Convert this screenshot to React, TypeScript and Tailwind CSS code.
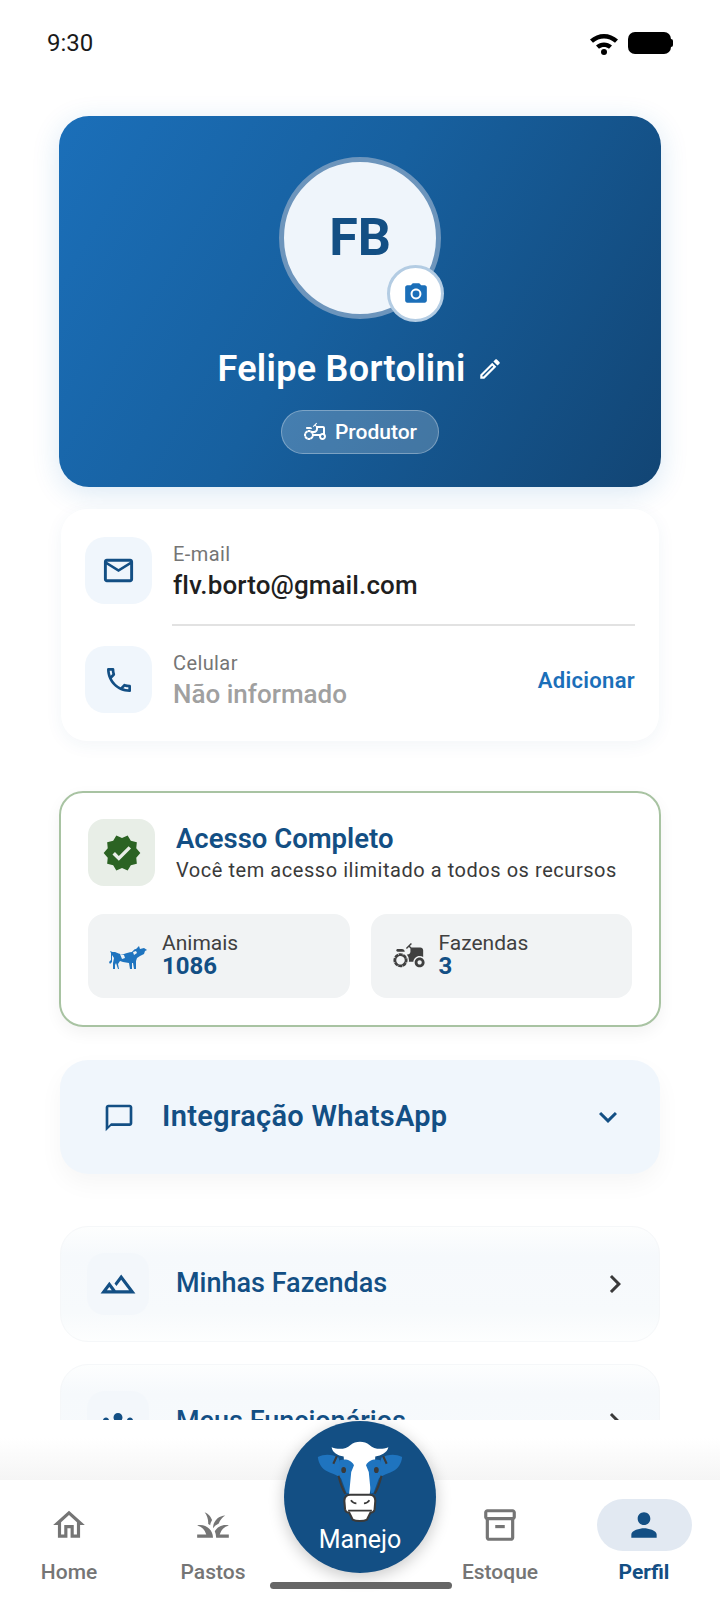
import React from 'react'
import {
  MdAgriculture,
  MdCameraAlt,
  MdChevronRight,
  MdGrass,
  MdGroups,
  MdKeyboardArrowDown,
  MdOutlineAgriculture,
  MdOutlineChatBubbleOutline,
  MdOutlineEdit,
  MdOutlineHome,
  MdOutlineInventory2,
  MdOutlineLandscape,
  MdOutlineLocalPhone,
  MdOutlineMailOutline,
  MdPerson,
  MdVerified,
} from 'react-icons/md'

function StatusBar() {
  return (
    <div className="flex h-[86px] items-center justify-between pl-[47px] pr-[47px]">
      <span className="text-[24px] leading-none text-[#1a1a1a]">9:30</span>
      <div className="flex items-center gap-[9px]">
        <svg width="30" height="24" viewBox="0 0 30 24">
          <path d="M1 8.500C9 1 21 1 29 8.500l-3 3.200C19.500 6 10.500 6 4 11.700z" fill="#000" />
          <path d="M7 14.600c4.600-4 11.400-4 16 0l-3 3.200c-3-2.500-7-2.500-10 0z" fill="#000" />
          <circle cx="15" cy="21" r="3" fill="#000" />
        </svg>
        <div className="flex items-center">
          <div className="h-[22px] w-[43px] rounded-[7px] bg-black" />
          <div className="h-[8px] w-[2px] rounded-r-sm bg-black" />
        </div>
      </div>
    </div>
  )
}

function ProfileHeader() {
  return (
    <div className="mx-[59px] mt-[30px] flex h-[371px] flex-col items-center rounded-[30px] bg-[linear-gradient(120deg,#1b6fb9_0%,#17609f_45%,#124574_100%)] pt-[41px] shadow-[0_6px_28px_rgba(27,111,185,0.16)]">
      <div className="relative h-[162px] w-[162px] rounded-full border-[5px] border-[#6d95bc] bg-[#eff5fb]">
        <div className="flex h-full items-center justify-center text-[52px] font-bold leading-none text-[#134f84]">FB</div>
        <div className="absolute left-[103px] top-[103px] flex h-[57px] w-[57px] items-center justify-center rounded-full border-[3px] border-[#b3cce3] bg-white text-[#1b6fb9]">
          <MdCameraAlt size={26} />
        </div>
      </div>
      <div className="mt-[28px] flex items-center gap-[11px]">
        <span className="text-[36px] font-semibold leading-[44px] tracking-[0.3px] text-white">Felipe Bortolini</span>
        <MdOutlineEdit size={26} className="text-white" />
      </div>
      <div className="mt-[19px] flex h-[44px] w-[158px] items-center justify-center gap-[8px] rounded-full border border-white/30 bg-white/20 text-white">
        <MdOutlineAgriculture size={24} />
        <span className="text-[21px] font-medium leading-none">Produtor</span>
      </div>
    </div>
  )
}

function IconBox({ children }: { children: React.ReactNode }) {
  return (
    <div className="flex h-[67px] w-[67px] shrink-0 items-center justify-center rounded-[20px] bg-[#f0f6fc] text-[#134f84]">
      {children}
    </div>
  )
}

function ContactCard() {
  return (
    <div className="mx-[61px] mt-[22px] h-[232px] rounded-[26px] bg-white px-[24px] pt-[28px] shadow-[0_4px_18px_rgba(27,79,132,0.06)]">
      <div className="flex items-center gap-[21px]">
        <IconBox>
          <MdOutlineMailOutline size={35} />
        </IconBox>
        <div className="mt-[3px]">
          <p className="text-[20px] leading-[26px] tracking-[0.4px] text-[#757575]">E-mail</p>
          <p className="text-[26px] font-medium leading-[36px] tracking-[0.1px] text-[#1f1f1f]">flv.borto@gmail.com</p>
        </div>
      </div>
      <div className="ml-[87px] mt-[20px] h-[2px] bg-[#e2e2e2]" />
      <div className="mt-[20px] flex items-center gap-[21px]">
        <IconBox>
          <MdOutlineLocalPhone size={32} />
        </IconBox>
        <div className="mt-[3px] flex-1">
          <p className="text-[20px] leading-[26px] tracking-[0.4px] text-[#757575]">Celular</p>
          <p className="text-[26px] font-medium leading-[36px] text-[#a0a0a0]">Não informado</p>
        </div>
        <span className="mt-[2px] text-[22px] font-semibold tracking-[0.3px] text-[#1b6fb9]">Adicionar</span>
      </div>
    </div>
  )
}

function SmallCow() {
  return (
    <svg width="38" height="28" viewBox="0 0 38 28" fill="#1f74bf">
      <path d="M1 9c2 1 3 1 5 1 3 1 6 3 9 2 3-1 5-2 8-2 1-1 2-3 4-3l3-3 1 3 4-1 3 2-2 1-1 3-4 2-3 2-1 3 0 8h-2l-1-6-1 0 0 6h-2l-1-6-6-1-3-1-2 3 1 5H9l-2-6-1 2 0 4H4l0-6 1-5-2-3 0 7-2 2-1-2 2-2 0-7z" />
      <path d="M11 12l4 1 1 3-3 1z" fill="#eff3f5" />
      <path d="M24 10l3-1 1 2-3 2z" fill="#eff3f5" />
    </svg>
  )
}

function StatBox({ icon, label, value, textGap }: { icon: React.ReactNode; label: string; value: string; textGap: string }) {
  return (
    <div className="flex h-[84px] flex-1 items-center rounded-[16px] bg-[#f1f3f4] pl-[21px]">
      {icon}
      <div className={`${textGap} mb-[3px]`}>
        <p className="text-[21px] leading-[23px] text-[#404040]">{label}</p>
        <p className="text-[24px] font-bold leading-[22px] text-[#134f84]">{value}</p>
      </div>
    </div>
  )
}

function AccessCard() {
  return (
    <div className="mx-[59px] mt-[50px] h-[236px] rounded-[24px] border-2 border-[#a8c3a2] bg-white px-[27px] pt-[26px] shadow-[0_6px_16px_rgba(0,0,0,0.05)]">
      <div className="flex items-center gap-[21px]">
        <div className="flex h-[67px] w-[67px] shrink-0 items-center justify-center rounded-[16px] bg-[#e8eee7] text-[#2b6323]">
          <MdVerified size={40} />
        </div>
        <div>
          <p className="text-[27.5px] font-semibold leading-[34px] text-[#134f84]">Acesso Completo</p>
          <p className="text-[20px] leading-[28px] tracking-[0.55px] text-[#3a3a3a]">
            Você tem acesso ilimitado a todos os recursos
          </p>
        </div>
      </div>
      <div className="mt-[28px] flex gap-[21px]">
        <StatBox icon={<SmallCow />} label="Animais" value="1086" textGap="ml-[15px]" />
        <StatBox icon={<MdAgriculture size={34} className="text-[#404040]" />} label="Fazendas" value="3" textGap="ml-[13px]" />
      </div>
    </div>
  )
}

function WhatsappCard() {
  return (
    <div className="mx-[60px] mt-[33px] flex h-[114px] items-center rounded-[28px] bg-[#f0f6fc] pl-[43px] pr-[34px] text-[#134f84] shadow-[0_10px_24px_rgba(0,0,0,0.04)]">
      <MdOutlineChatBubbleOutline size={32} className="mt-[1px]" />
      <span className="ml-[27px] flex-1 text-[29px] font-semibold tracking-[0.3px]">Integração WhatsApp</span>
      <MdKeyboardArrowDown size={36} />
    </div>
  )
}

function MenuRow({ icon, label, className }: { icon: React.ReactNode; label: string; className: string }) {
  return (
    <div className={`mx-[60px] h-[116px] rounded-[28px] border border-[#f5f7f9] bg-[linear-gradient(#fdfefe,#f6f9fc_25%,#f7fafc_75%,#fdfefe)] pl-[26px] pr-[26px] pt-[26px] ${className}`}>
      <div className="flex items-start">
        <div className="flex h-[62px] w-[62px] shrink-0 items-center justify-center rounded-[18px] bg-[#f3f7fb] text-[#134f84]">
          {icon}
        </div>
        <span className="ml-[27px] mt-[14px] flex-1 text-[27px] font-medium leading-[32px] text-[#134f84]">{label}</span>
        <MdChevronRight size={36} className="mt-[13px] text-[#3a3a3a]" />
      </div>
    </div>
  )
}

function NavItem({ icon, label, active }: { icon: React.ReactNode; label: string; active?: boolean }) {
  return (
    <div className="flex flex-col items-center">
      <div className={`flex h-[52px] w-[95px] items-center justify-center rounded-[26px] ${active ? 'bg-[#e2e9f2] text-[#134f84]' : 'text-[#757575]'}`}>
        {icon}
      </div>
      <span className={`mt-[8px] text-[21px] leading-[26px] ${active ? 'font-bold text-[#134f84]' : 'font-medium text-[#757575]'}`}>
        {label}
      </span>
    </div>
  )
}

function CowHead() {
  return (
    <svg width="92" height="86" viewBox="140 85 265 250">
      <path d="M150 140c20-10 42-8 60 2l22 75c-15-22-35-25-55-35-15-8-25-22-27-42z" fill="#1f74bf" />
      <path d="M395 140c-20-10-42-8-60 2l-22 75c15-22 35-25 55-35 15-8 25-22 27-42z" fill="#1f74bf" />
      <path d="M205 138l-10 22M340 138l10 22" stroke="#3a3a3a" strokeWidth="6" fill="none" />
      <path d="M190 112c22 8 42 5 55-7 15-12 40-12 55 0 13 12 33 15 55 7-4 16-20 24-38 27l-3 40-14 72h-58l-14-72-3-40c-18-3-32-11-35-27z" fill="#fff" />
      <path d="M213 150c16-6 34-2 42 14l-8 20-6 62-8-2-20-54z" fill="#1f74bf" />
      <path d="M332 150c-16-6-34-2-42 14l8 20 6 62 8-2 20-54z" fill="#1f74bf" />
      <path d="M210 195c5 20 10 38 20 52M335 195c-5 20-10 38-20 52" stroke="#3a3a3a" strokeWidth="6" fill="none" />
      <ellipse cx="225" cy="178" rx="7" ry="9" fill="#3a3a3a" />
      <ellipse cx="320" cy="178" rx="7" ry="9" fill="#3a3a3a" />
      <path d="M245 250h55c12 0 17 6 17 18l-2 24c-1 8-6 10-12 10l-10 20c-10 6-32 6-42 0l-10-20c-7 0-11-2-12-10l-2-24c0-12 6-18 18-18z" fill="#fff" stroke="#3a3a3a" strokeWidth="6" />
      <path d="M246 266c5 7 10 9 16 9M300 266c-5 7-10 9-16 9M238 296h69" stroke="#3a3a3a" strokeWidth="5" fill="none" />
    </svg>
  )
}

export default function App() {
  return (
    <div className="relative h-[1606px] w-[720px] overflow-hidden bg-white font-[Roboto,sans-serif]">
      <div className="h-[1420px] overflow-hidden">
        <StatusBar />
        <ProfileHeader />
        <ContactCard />
        <AccessCard />
        <WhatsappCard />
        <MenuRow className="mt-[52px]" icon={<MdOutlineLandscape size={38} />} label="Minhas Fazendas" />
        <MenuRow className="mt-[22px]" icon={<MdGroups size={36} />} label="Meus Funcionários" />
      </div>
      <div className="h-[60px] bg-[linear-gradient(#ffffff_30%,#f5f5f5)]" />
      <div className="grid h-[126px] grid-cols-[138px_150px_144px_136px_152px] bg-white pt-[19px]">
        <NavItem icon={<MdOutlineHome size={38} />} label="Home" />
        <NavItem icon={<MdGrass size={38} />} label="Pastos" />
        <div />
        <NavItem icon={<MdOutlineInventory2 size={38} />} label="Estoque" />
        <NavItem active icon={<MdPerson size={38} />} label="Perfil" />
      </div>
      <div className="absolute left-[284px] top-[1421px] flex h-[152px] w-[152px] flex-col items-center rounded-full bg-[#134f84] pt-[17px] shadow-[0_4px_16px_rgba(0,0,0,0.22)]">
        <CowHead />
        <span className="mt-[2px] text-[25px] leading-[28px] text-white">Manejo</span>
      </div>
      <div className="absolute left-[270px] top-[1582px] h-[7px] w-[182px] rounded-full bg-[#666666]" />
    </div>
  )
}
